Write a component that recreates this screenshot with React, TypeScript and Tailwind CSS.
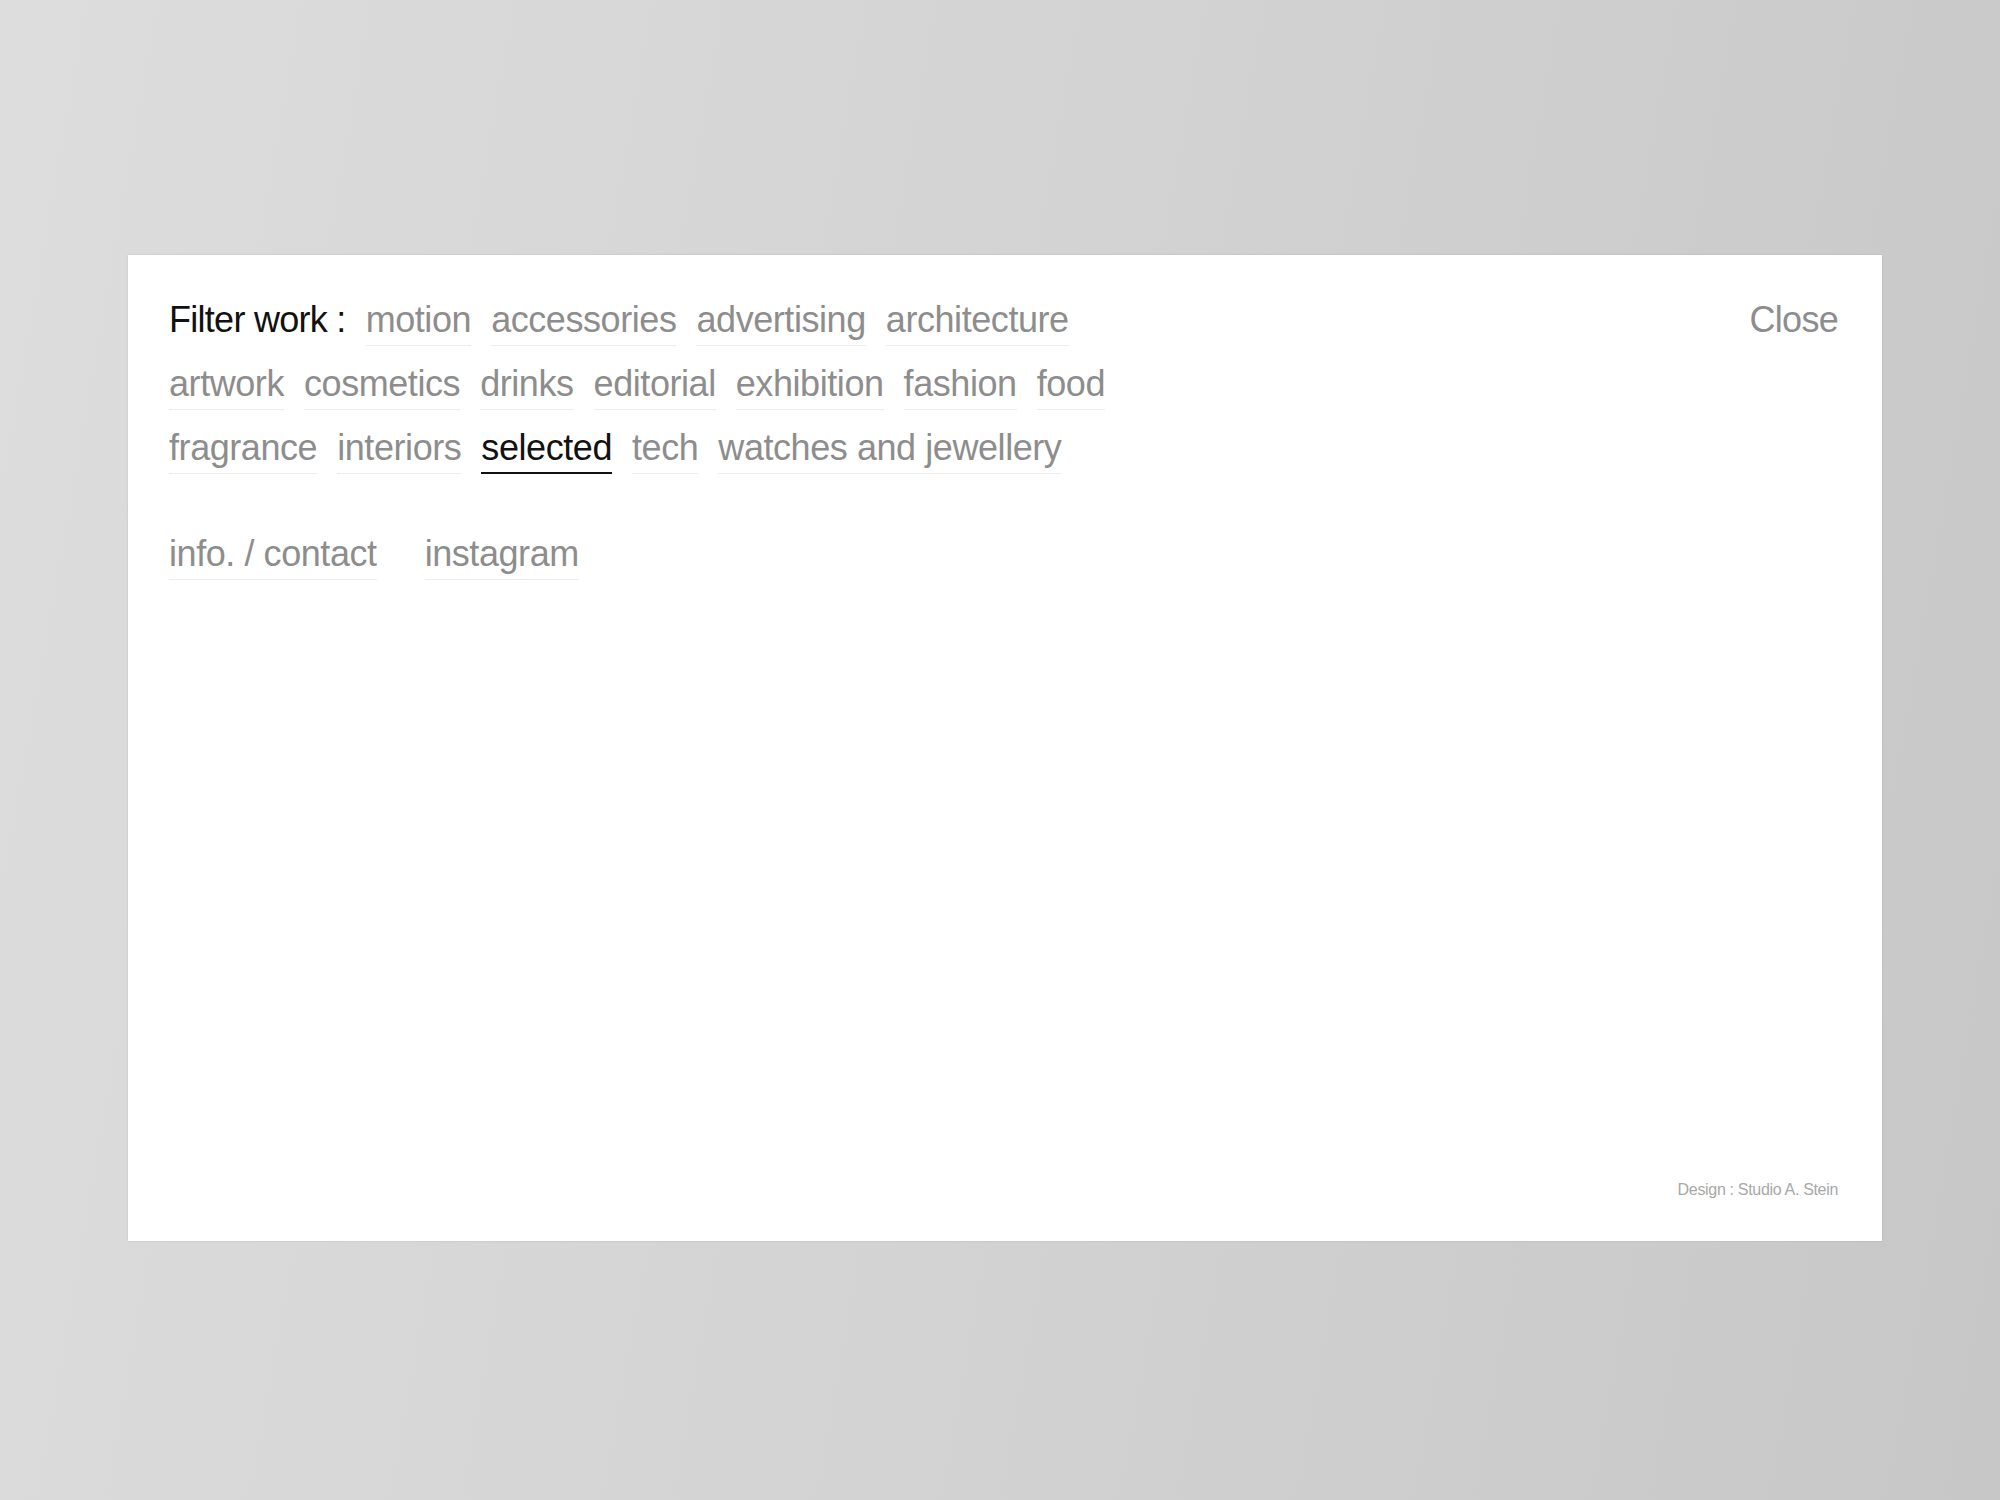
import { useState } from "react";

const ROWS: string[][] = [
  ["motion", "accessories", "advertising", "architecture"],
  ["artwork", "cosmetics", "drinks", "editorial", "exhibition", "fashion", "food"],
  ["fragrance", "interiors", "selected", "tech", "watches and jewellery"],
];

export default function App() {
  const [active, setActive] = useState("selected");

  return (
    <div className="min-h-screen w-full bg-linear-100 from-[#dddddd] via-[#d3d3d3] to-[#c7c7c7] pt-[255px] pl-[128px] font-['Liberation_Sans',Arial,sans-serif]">
      <div className="w-[1754px] h-[986px] bg-white shadow-[0_0_2px_rgba(0,0,0,0.12)] flex flex-col justify-between pt-[47px] pb-[43px] pl-[41px] pr-[44px]">
        <div>
          <div className="flex items-start justify-between">
            {/* Filters */}
            <div className="flex flex-col gap-y-5 text-[36px] leading-none tracking-[-0.012em]">
              {ROWS.map((row, i) => (
                <div key={i} className="flex gap-x-5">
                  {i === 0 && (
                    <span className="pb-[7px] border-b border-transparent text-[#111111] tracking-[-0.02em]">Filter work :</span>
                  )}
                  {row.map((f) => (
                    <button
                      key={f}
                      onClick={() => setActive(f)}
                      className={
                        active === f
                          ? "pb-[6px] border-b-2 border-[#111111] text-[#111111] leading-none"
                          : "pb-[7px] border-b border-[#ededed] text-[#8d8d8d] leading-none"
                      }
                    >
                      {f}
                    </button>
                  ))}
                </div>
              ))}
            </div>
            <button className="text-[36px] leading-none tracking-[-0.02em] text-[#8d8d8d] pb-[7px]">Close</button>
          </div>

          <div className="flex gap-12 mt-[62px] text-[36px] leading-none tracking-[-0.012em]">
            {["info. / contact", "instagram"].map((l) => (
              <a key={l} href="#" className="pb-[7px] border-b border-[#ededed] text-[#8d8d8d]">
                {l}
              </a>
            ))}
          </div>
        </div>

        <p className="self-end text-[16px] leading-none tracking-[-0.02em] text-[#a8a8a8]">Design : Studio A. Stein</p>
      </div>
    </div>
  );
}
